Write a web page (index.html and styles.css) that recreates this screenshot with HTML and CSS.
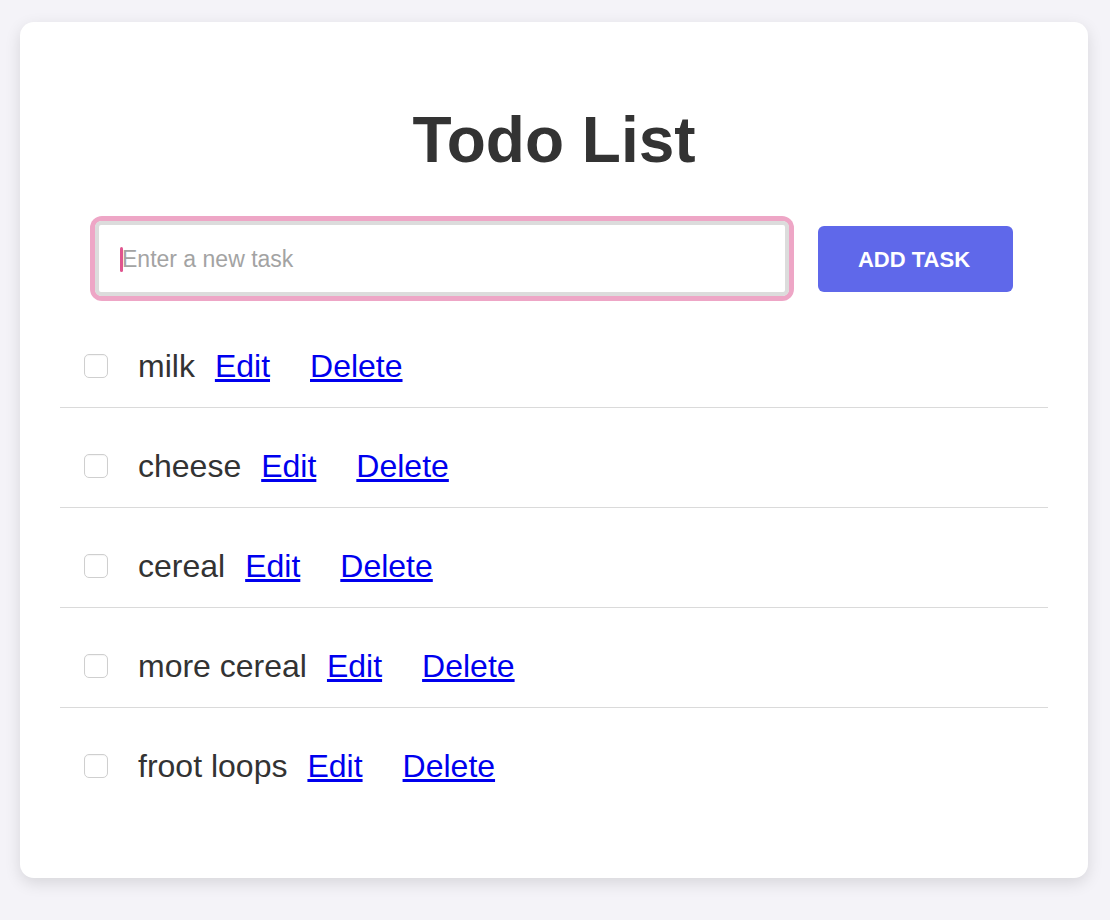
FILE: index.html
```html
<!DOCTYPE html>
<html lang="en">
<head>
<meta charset="utf-8">
<title>Todo List</title>
<link rel="stylesheet" href="styles.css">
</head>
<body>
<main class="card">
  <h1 class="title">Todo List</h1>
  <form class="add-form" onsubmit="return false">
    <div class="input-wrap">
      <span class="caret"></span>
      <input class="task-input" type="text" placeholder="Enter a new task">
    </div>
    <button class="add-btn" type="submit">ADD TASK</button>
  </form>
  <ul class="todo-list">
    <li class="todo-item"><input class="check" type="checkbox"><span class="todo-text">milk</span><a class="todo-link edit" href="#">Edit</a><a class="todo-link" href="#">Delete</a></li>
    <li class="todo-item"><input class="check" type="checkbox"><span class="todo-text">cheese</span><a class="todo-link edit" href="#">Edit</a><a class="todo-link" href="#">Delete</a></li>
    <li class="todo-item"><input class="check" type="checkbox"><span class="todo-text">cereal</span><a class="todo-link edit" href="#">Edit</a><a class="todo-link" href="#">Delete</a></li>
    <li class="todo-item"><input class="check" type="checkbox"><span class="todo-text">more cereal</span><a class="todo-link edit" href="#">Edit</a><a class="todo-link" href="#">Delete</a></li>
    <li class="todo-item"><input class="check" type="checkbox"><span class="todo-text">froot loops</span><a class="todo-link edit" href="#">Edit</a><a class="todo-link" href="#">Delete</a></li>
  </ul>
</main>
</body>
</html>
```

FILE: styles.css
```css
* { box-sizing: border-box; }

html, body {
  margin: 0;
  padding: 0;
}

html {
  background: #f4f3f8;
}

body {
  background: #f4f3f8;
  font-family: "Liberation Sans", Arial, Helvetica, sans-serif;
  color: #333;
  padding: 22px 22px 42px 20px;
  min-height: 920px;
}

.card {
  background: #fff;
  border-radius: 14px;
  box-shadow: 0 5px 16px rgba(0, 0, 0, 0.12);
  padding: 40px;
  width: 1068px;
  height: 856px;
  display: flex;
  flex-direction: column;
}

.title {
  margin: 40px 0 42px;
  font-size: 64px;
  line-height: 1.2;
  font-weight: 700;
  text-align: center;
  color: #333;
  letter-spacing: 0;
}

.add-form {
  display: flex;
  align-items: center;
  justify-content: center;
  gap: 29px;
  margin: 0;
}

.input-wrap {
  position: relative;
  width: 694px;
  height: 75px;
  border-radius: 7px;
  box-shadow: 0 0 0 5px #eea6c6;
}

.task-input {
  display: block;
  width: 100%;
  height: 100%;
  border: 4px solid #dcdcdc;
  border-radius: 6px;
  padding: 3px 0 0 23px;
  font-family: "Liberation Sans", Arial, sans-serif;
  font-size: 23px;
  color: #333;
  outline: none;
  background: #fff;
}

.task-input::placeholder {
  color: #a3a3a3;
}

.caret {
  position: absolute;
  left: 25px;
  top: 26px;
  width: 3px;
  height: 25px;
  border-radius: 2px;
  background: #e0558f;
  z-index: 1;
}

.add-btn {
  width: 195px;
  height: 66px;
  margin-top: 1px;
  padding: 3px 3px 0 0;
  border: none;
  border-radius: 6px;
  background: #5f68ea;
  color: #fff;
  font-family: "Liberation Sans", Arial, sans-serif;
  font-weight: 700;
  font-size: 22px;
  letter-spacing: 0;
  cursor: pointer;
}

.todo-list {
  list-style: none;
  margin: 12px 0 0;
  padding: 0;
}

.todo-item {
  display: flex;
  align-items: center;
  margin-top: 17px;
  padding: 22px 24px;
  border-bottom: 1px solid #dadada;
  font-size: 32px;
  line-height: 38px;
}

.todo-item:last-child {
  border-bottom: none;
}

.check {
  appearance: none;
  -webkit-appearance: none;
  width: 24px;
  height: 24px;
  margin: 0 30px 0 0;
  border: 1px solid #cfcfcf;
  border-radius: 5px;
  background: #fff;
  box-shadow: inset 0 1px 1px rgba(0, 0, 0, 0.04);
  flex: none;
}

.todo-text {
  color: #333;
  margin-right: 20px;
}

.todo-link {
  color: #0000ee;
  text-decoration: underline;
}

.todo-link.edit {
  margin-right: 40px;
}
```
